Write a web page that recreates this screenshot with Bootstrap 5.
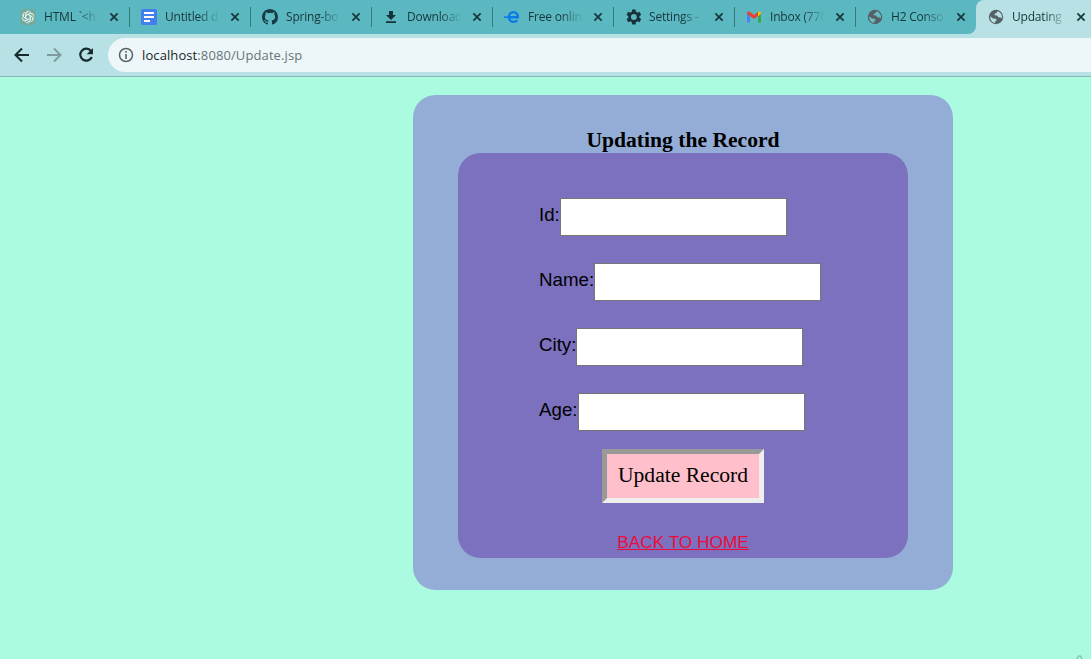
<!DOCTYPE html>
<html lang="en">
<head>
<meta charset="utf-8">
<title>Updating the Record</title>
<link href="https://cdn.jsdelivr.net/npm/bootstrap@5.3.0/dist/css/bootstrap.min.css" rel="stylesheet">
<style>
body{background:#aafbdf;height:659px;overflow:hidden;font-family:"Open Sans",sans-serif;color:#000}
.tabstrip{height:34px;background:#b7e1e4}
.tabs-idle{width:976px;padding-left:8px;background:#5bb8c0;border-bottom-right-radius:8px}
.tabitem{width:121px;height:34px;padding-left:12px;position:relative;flex:none}
.tabitem svg{flex:none}
.tabs-idle .tabitem:not(:last-child)::after{content:"";position:absolute;right:-1px;top:7px;width:1px;height:20px;background:#34777f}
.tabname{width:55px;margin-left:8px;margin-right:10px;overflow:hidden;white-space:nowrap;font-size:12px;line-height:20px;letter-spacing:-.2px;color:#16363b;flex:none;-webkit-mask-image:linear-gradient(90deg,#000 60%,transparent);mask-image:linear-gradient(90deg,#000 60%,transparent)}
.tab-open{width:115px;background:#b7e1e4;border-top-left-radius:8px}
.tab-open .tabname{margin-right:9px}
.tab-back{background:#5bb8c0;width:115px}
.toolbar{height:43px;background:#b7e1e4;border-bottom:1px solid #84b9b8;padding-left:14px}
.toolbar>svg{flex:none;margin-right:16px}
.address{height:34px;margin-left:-2px;border-radius:17px 0 0 17px;background:#edf7f9;padding-left:10px;font-size:13px;letter-spacing:.1px;color:#697378;white-space:nowrap}
.address span{padding-top:1px}
.address b{font-weight:400;color:#182529}
.outer{width:540px;height:495px;margin:18px 0 0 413px;padding:32px 45px 0;border-radius:22.5px;background:#94add7}
.outer h1{font:bold 21.6px/26px "Liberation Serif",serif;margin:0}
.inner{height:405px;border-radius:22.5px;background:#7b71be;padding-top:45px;font-family:"Liberation Sans",sans-serif}
.fields{gap:27px;padding-left:81px;font-size:18.72px}
.fields label{line-height:34px;height:38px}
.fields label[for=rage]{padding-right:.6px}
.fields input{width:227px;height:38px;border:1px solid #767676;background:#fff;border-radius:0;padding:0;outline:0}
.update{width:162px;height:54px;margin-top:18px;border:5px solid;border-color:#999 #eee #eee #999;border-radius:0;background:#ffc0cb;font:21.6px/40px "Liberation Serif",serif;padding:0 0 2px;color:#000}
.home{font-size:17.25px;line-height:20px;color:#eb0c3c;margin-top:29px}
.peek{position:absolute;left:1076px;bottom:0;line-height:0}
</style>
</head>
<body>
<svg class="d-none" xmlns="http://www.w3.org/2000/svg">
<symbol id="x" viewBox="0 0 10 10"><path d="M1.4 1.4 8.6 8.6M8.6 1.4 1.4 8.6" stroke="#17353a" stroke-width="1.7"/></symbol>
<symbol id="globe" viewBox="0 0 16 16"><circle cx="8" cy="8" r="7.2" fill="#555f66"/><path d="M2.2 7.2 5 9.4l2.800.3 1 1.500-1.500.8v1.800C4 13.700 2 11 2.200 7.200ZM9.300 2.300 8.600 4 6.800 4.700 6.500 6.300 9 6.400l1.300 1.800 2.300.2 1.300 1.200c.7-3.200-1.100-6.300-4.600-7.300Z" fill="currentColor"/></symbol>
</svg>
<header>
<div class="tabstrip d-flex">
 <div class="tabs-idle d-flex flex-shrink-0">
  <div class="tabitem d-flex align-items-center"><svg width="16" height="16" viewBox="0 0 16 16"><rect width="16" height="16" rx="2.500" fill="#74aa9c"/><g fill="none" stroke="#e4f5f0" stroke-width=".8"><path id="petal" d="M5.700 8.800V4.700a2.600 2.600 0 0 1 4.800-1.400M5.700 6.700 9 4.800a2.500 2.500 0 0 1 3.500 1"/><use href="#petal" transform="rotate(60 8 8)"/><use href="#petal" transform="rotate(120 8 8)"/><use href="#petal" transform="rotate(180 8 8)"/><use href="#petal" transform="rotate(240 8 8)"/><use href="#petal" transform="rotate(300 8 8)"/></g></svg><span class="tabname">HTML `&lt;h</span><svg width="10" height="10"><use href="#x"/></svg></div>
  <div class="tabitem d-flex align-items-center"><svg width="16" height="16"><rect width="16" height="16" rx="1.500" fill="#4380ee"/><path d="M3 4h10M3 8h10M3 12h6" stroke="#fff" stroke-width="1.800"/></svg><span class="tabname">Untitled d</span><svg width="10" height="10"><use href="#x"/></svg></div>
  <div class="tabitem d-flex align-items-center"><svg width="16" height="16" viewBox="0 0 16 16"><path fill="#173c45" d="M8 0C3.580 0 0 3.580 0 8c0 3.540 2.290 6.530 5.470 7.590.4.070.55-.17.55-.38 0-.19-.01-.82-.01-1.490-2.010.37-2.530-.49-2.690-.94-.09-.23-.48-.94-.82-1.130-.28-.15-.68-.52-.01-.53.63-.01 1.080.58 1.230.82.72 1.210 1.870.87 2.330.66.07-.52.28-.87.51-1.070-1.780-.2-3.640-.89-3.640-3.950 0-.87.31-1.590.82-2.150-.08-.2-.36-1.020.08-2.120 0 0 .67-.21 2.200.82a7.600 7.600 0 0 1 4 0c1.530-1.040 2.200-.82 2.200-.82.44 1.100.16 1.920.08 2.120.51.56.82 1.270.82 2.150 0 3.070-1.870 3.750-3.650 3.950.29.25.54.73.54 1.480 0 1.070-.01 1.930-.01 2.200 0 .21.15.46.55.38A8 8 0 0 0 16 8c0-4.420-3.580-8-8-8Z"/></svg><span class="tabname">Spring-bo</span><svg width="10" height="10"><use href="#x"/></svg></div>
  <div class="tabitem d-flex align-items-center"><svg width="16" height="16"><path d="M6 2h4v4h3L8 11 3 6h3ZM3 12.300h10V14H3Z" fill="#173238"/></svg><span class="tabname">Downloac</span><svg width="10" height="10"><use href="#x"/></svg></div>
  <div class="tabitem d-flex align-items-center"><svg width="16" height="16"><path d="M4.500 8.200H13.800C13.800 5 12 3.100 9.500 3.100 6.700 3.100 4.900 5.200 4.900 8s1.800 4.900 4.600 4.900c1.700 0 2.900-.5 3.900-1.600" fill="none" stroke="#087be9" stroke-width="2.400"/><path d="M0 8.200h5" stroke="#087be9" stroke-width="1.600"/></svg><span class="tabname">Free onlin</span><svg width="10" height="10"><use href="#x"/></svg></div>
  <div class="tabitem d-flex align-items-center"><svg width="16" height="16" viewBox="3 3 18 18"><path fill="#173238" d="M19.140 12.940a7 7 0 0 0 0-1.880l2.030-1.580-1.920-3.320-2.390.96a7 7 0 0 0-1.620-.94L14.880 3.640H11.040l-.36 2.540a7 7 0 0 0-1.620.94l-2.390-.96-1.920 3.320 2.030 1.580a7 7 0 0 0 0 1.880l-2.030 1.580 1.920 3.320 2.390-.96a7 7 0 0 0 1.620.94l.36 2.540h3.840l.36-2.540a7 7 0 0 0 1.620-.94l2.390.96 1.920-3.320ZM12.960 15.300a3.300 3.300 0 1 1 0-6.600 3.300 3.300 0 0 1 0 6.600Z"/></svg><span class="tabname">Settings -</span><svg width="10" height="10"><use href="#x"/></svg></div>
  <div class="tabitem d-flex align-items-center"><svg width="16" height="16"><path d="M1 4v9.500h3V7Z" fill="#4285f4"/><path d="M15 4v9.500h-3V7Z" fill="#34a853"/><path d="M1 4.500C1 2.300 2.800 2 4 3l4 3 4-3v4L8 10 4 7.200 1 5Z" fill="#e34436"/><path d="M12 3c1.400-1 3-.4 3 1.500V5l-3 2.200Z" fill="#fbbc04"/></svg><span class="tabname">Inbox (776</span><svg width="10" height="10"><use href="#x"/></svg></div>
  <div class="tabitem d-flex align-items-center"><svg width="16" height="16" style="color:#69bac1"><use href="#globe"/></svg><span class="tabname">H2 Conso</span><svg width="10" height="10"><use href="#x"/></svg></div>
 </div>
 <div class="tab-back"><div class="tabitem tab-open d-flex align-items-center"><svg width="16" height="16" style="color:#b7e1e4"><use href="#globe"/></svg><span class="tabname">Updating</span><svg width="10" height="10"><use href="#x"/></svg></div></div>
</div>
<nav class="toolbar d-flex align-items-center">
 <svg width="16" height="16"><path d="M15 8H2M8 1.500 1.500 8 8 14.500" fill="none" stroke="#172a2e" stroke-width="2"/></svg>
 <svg width="16" height="16"><path d="M1 8h13M8 1.500 14.500 8 8 14.500" fill="none" stroke="#7f9b9f" stroke-width="2"/></svg>
 <svg width="16" height="16"><path d="M13 4A6 6 0 1 0 13.800 10" fill="none" stroke="#172a2e" stroke-width="2.200"/><path d="M15 1v6.300H8.700Z" fill="#172a2e"/></svg>
 <div class="address d-flex align-items-center flex-grow-1"><svg class="me-2" width="16" height="16"><circle cx="8" cy="8" r="6.500" fill="none" stroke="#596368" stroke-width="1.500"/><path d="M8 7v5M8 4v1.700" stroke="#596368" stroke-width="1.600"/></svg><span><b>localhost</b>:8080/Update.jsp</span></div>
</nav>
</header>
<main class="outer text-center">
 <h1>Updating the Record</h1>
 <form class="inner">
  <div class="fields d-flex flex-column">
   <div class="d-flex"><label for="rid">Id:</label><input id="rid"></div>
   <div class="d-flex"><label for="rname">Name:</label><input id="rname"></div>
   <div class="d-flex"><label for="rcity">City:</label><input id="rcity"></div>
   <div class="d-flex"><label for="rage">Age:</label><input id="rage"></div>
  </div>
  <button type="button" class="update d-block mx-auto">Update Record</button>
  <a class="home d-inline-block" href="#">BACK TO HOME</a>
 </form>
</main>
<div class="peek"><svg width="7" height="4"><path d="M1 4 2.500 1h2L6 4" fill="none" stroke="#79b9a8" stroke-width="1.200"/></svg></div>
<script src="https://cdn.jsdelivr.net/npm/bootstrap@5.3.0/dist/js/bootstrap.bundle.min.js"></script>
</body>
</html>
